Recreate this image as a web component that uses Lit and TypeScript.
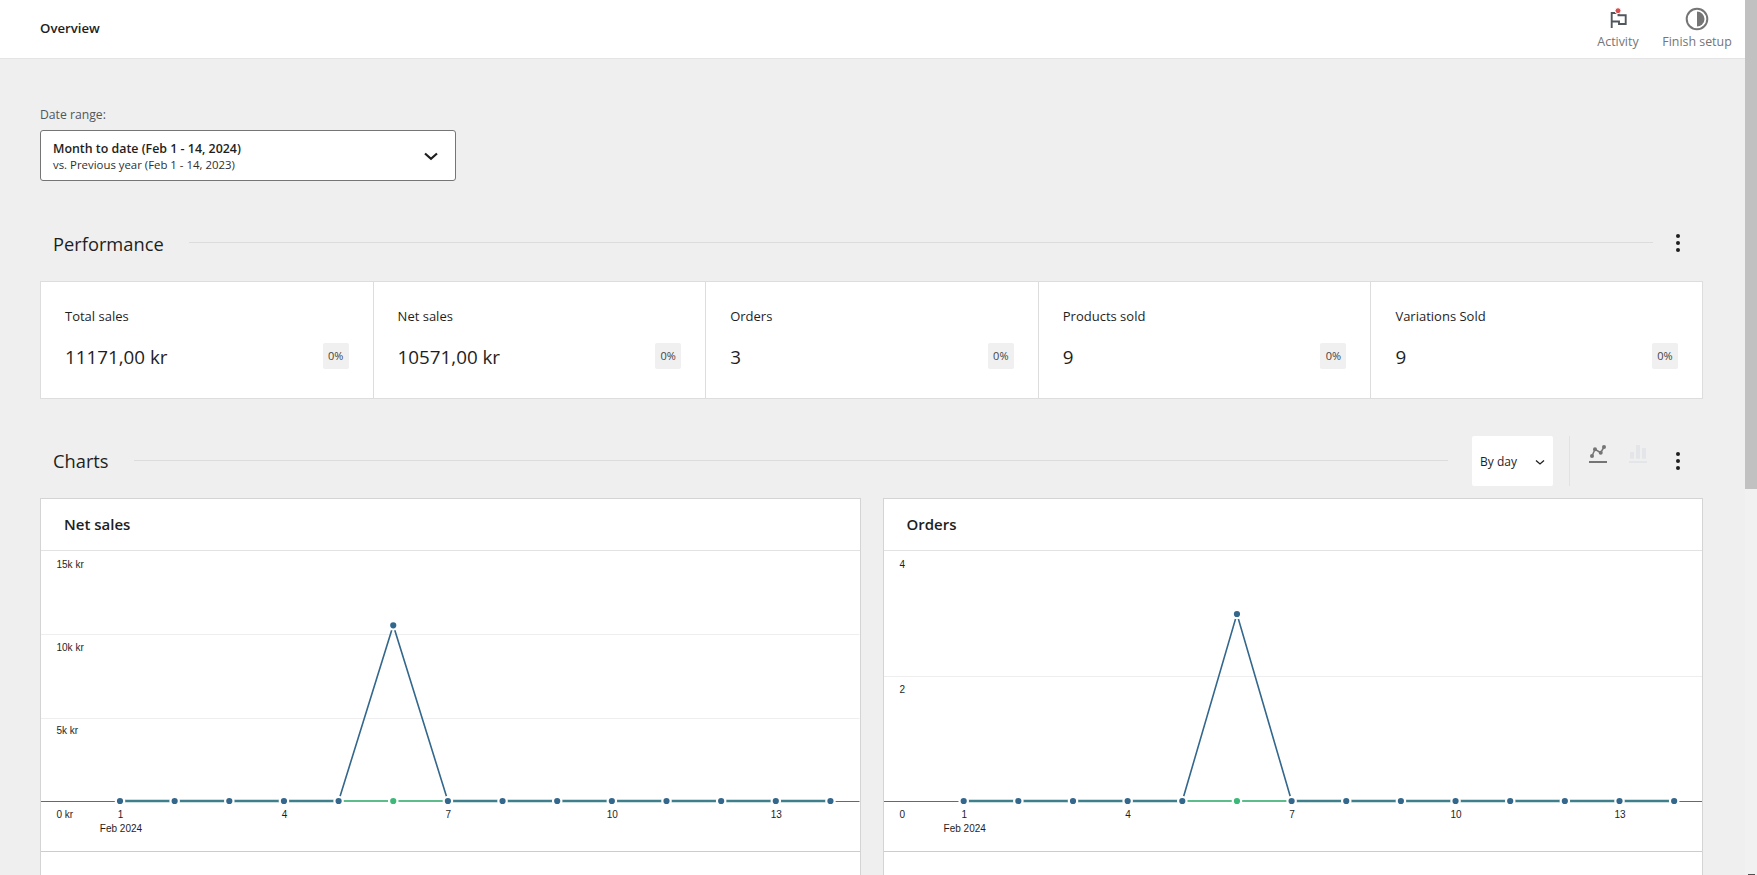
import { LitElement, css, html, svg } from "lit";
import { customElement, property } from "lit/decorators.js";

const PITCH = 54.65;
const BASE_Y = 250.5;
const CHART_H = 250;

const tiles = [
  { label: "Total sales", value: "11171,00 kr" },
  { label: "Net sales", value: "10571,00 kr" },
  { label: "Orders", value: "3" },
  { label: "Products sold", value: "9" },
  { label: "Variations Sold", value: "9" },
];

@customElement("line-chart")
export class LineChart extends LitElement {
  @property({ type: Number }) peak = 0;
  @property({ type: Number }) max = 1;
  @property({ type: Number }) firstX = 79;
  @property({ type: Array }) ticks: { value: number; label: string }[] = [];

  static styles = css`
    :host {
      display: block;
      height: 300px;
    }
    svg {
      display: block;
      width: 100%;
      height: 300px;
    }
    .grid {
      stroke: #eeeeee;
      stroke-width: 1;
    }
    .axis {
      stroke: #686868;
      stroke-width: 1;
    }
    .label {
      font: 10px "Liberation Sans", Arial, sans-serif;
      fill: #1e1e1e;
    }
    .blue {
      fill: none;
      stroke: #33678c;
      stroke-width: 1.6;
    }
    .green {
      fill: none;
      stroke: #5cbc8c;
      stroke-width: 2;
    }
    .teal {
      fill: none;
      stroke: #3f7f8b;
      stroke-width: 2.4;
    }
    .dot {
      stroke: #ffffff;
      stroke-width: 2.2;
    }
  `;

  private yFor(v: number) {
    return BASE_Y - (v / this.max) * CHART_H;
  }

  render() {
    const xs = Array.from({ length: 14 }, (_, i) => this.firstX + i * PITCH);
    const peakY = this.yFor(this.peak);
    return html`<svg>
      ${this.ticks.map((t) =>
        svg`${t.value > 0 && t.value < this.max
          ? svg`<line class="grid" x1="0" x2="100%" y1=${Math.floor(this.yFor(t.value)) + 0.5} y2=${Math.floor(this.yFor(t.value)) + 0.5}></line>`
          : null}
        <text class="label" x="15.5" y=${this.yFor(t.value) + 16}>${t.label}</text>`
      )}
      <line class="axis" x1="0" x2="100%" y1="250.5" y2="250.5"></line>
      <path class="teal" d="M${xs[0]} 250H${xs[4]}M${xs[6]} 250H${xs[13]}"></path>
      <path class="green" d="M${xs[4]} 250H${xs[6]}"></path>
      <path class="blue" d="M${xs[4]} 250L${xs[5]} ${peakY}L${xs[6]} 250"></path>
      ${xs.map(
        (x, i) =>
          svg`<circle class="dot" cx=${x} cy="250" r="4.2" fill=${i === 5 ? "#3cb878" : "#33678c"}></circle>`
      )}
      <circle class="dot" cx=${xs[5]} cy=${peakY} r="4.2" fill="#33678c"></circle>
      ${xs
        .filter((_, i) => i % 3 === 0)
        .map(
          (x, i) =>
            svg`<text class="label" x=${x + 0.5} y="266.5" text-anchor="middle">${1 + i * 3}</text>`
        )}
      <text class="label" x=${xs[0] + 1} y="280.5" text-anchor="middle">Feb 2024</text>
    </svg>`;
  }
}

@customElement("app-root")
export class AppRoot extends LitElement {
  static styles = css`
    :host {
      display: flex;
      height: 875px;
      overflow: hidden;
      background: #efefef;
      font-family: "Open Sans", "Noto Sans", sans-serif;
      color: #1e1e1e;
    }
    .page {
      flex: 1;
      min-width: 0;
    }
    .scrollbar {
      width: 12px;
      background: #f1f1f1;
      display: flex;
      flex-direction: column;
      justify-content: space-between;
    }
    .thumb {
      height: 489px;
      background: #c1c1c1;
    }
    .mark {
      height: 1px;
      margin: 0 2px 0 3px;
      background: #505050;
    }
    .topbar {
      height: 58px;
      background: #fff;
      border-bottom: 1px solid #e4e4e4;
      display: flex;
      align-items: flex-start;
      justify-content: space-between;
      padding: 0 0 0 40px;
    }
    .topbar h1 {
      margin: 0;
      font-size: 13.2px;
      font-weight: 600;
      line-height: 56px;
    }
    .actions {
      display: flex;
    }
    .action {
      display: flex;
      flex-direction: column;
      align-items: center;
      font-size: 12.4px;
      color: #757575;
      padding: 7px 0 0;
      line-height: 16px;
    }
    .action.activity {
      width: 66px;
      margin-right: 4px;
    }
    .action.setup {
      width: 84px;
      margin-right: 6px;
    }
    .action svg {
      display: block;
      margin-bottom: 3px;
    }
    .content {
      padding: 48px 42px 0 40px;
    }
    .range-label {
      font-size: 12.2px;
      line-height: 16px;
      color: #50575e;
      margin-bottom: 7px;
    }
    .range {
      box-sizing: border-box;
      width: 416px;
      height: 51px;
      background: #fff;
      border: 1px solid #757575;
      border-radius: 3px;
      padding: 0 12px;
      display: flex;
      align-items: center;
      justify-content: space-between;
    }
    .range b {
      display: block;
      font-size: 12.4px;
      font-weight: 600;
      line-height: 17px;
    }
    .range span {
      display: block;
      font-size: 11.4px;
      line-height: 15px;
      color: #2f2f2f;
    }
    .section-head {
      display: flex;
      align-items: center;
      padding-left: 13px;
    }
    .section-head h2 {
      margin: 0;
      font-size: 18.3px;
      font-weight: 400;
      line-height: 24px;
    }
    .perf h2 {
      margin-top: 2px;
    }
    .rule {
      flex: 1;
      height: 1px;
      background: #dcdcdc;
      margin: 0 0 2px 25px;
    }
    .dots {
      width: 50px;
      display: flex;
      justify-content: center;
      flex: none;
    }
    .perf {
      margin-top: 50px;
      height: 24px;
    }
    .tiles {
      display: grid;
      grid-template-columns: repeat(5, 1fr);
      margin-top: 26px;
      background: #fff;
    }
    .tile {
      height: 118px;
      box-sizing: border-box;
      padding: 24px;
      border: 1px solid #dddddd;
      border-right: none;
    }
    .tile:last-child {
      border-right: 1px solid #dddddd;
    }
    .tile-label {
      font-size: 13px;
      line-height: 20px;
    }
    .tile-row {
      display: flex;
      align-items: center;
      justify-content: space-between;
      margin-top: 16px;
    }
    .tile-value {
      font-size: 18.8px;
      line-height: 26px;
      padding-top: 2px;
    }
    .chip {
      width: 26px;
      height: 26px;
      background: #f0f0f0;
      border-radius: 2px;
      font-size: 11px;
      line-height: 26px;
      text-align: center;
      color: #444;
    }
    .charts {
      margin-top: 37px;
      height: 50px;
    }
    .charts .rule {
      margin-right: 24px;
    }
    .interval {
      box-sizing: border-box;
      width: 81px;
      height: 50px;
      background: #fff;
      border-radius: 2px;
      padding: 0 8px;
      display: flex;
      align-items: center;
      justify-content: space-between;
      font-size: 12px;
    }
    .interval svg {
      margin: 2px 0 0;
      transform: translateX(1px);
    }
    .divider {
      width: 1px;
      height: 50px;
      background: #e2e2e2;
      margin-left: 16px;
    }
    .mode {
      flex: none;
      display: block;
      margin-bottom: 14px;
    }
    .mode.line {
      margin-left: 18px;
    }
    .mode.bar {
      margin-left: 20px;
    }
    .charts .dots {
      margin-left: 5px;
    }
    .cards {
      display: grid;
      grid-template-columns: 1fr 1fr;
      gap: 22px;
      margin-top: 12px;
    }
    .card {
      background: #fff;
      border: 1px solid #d4d4d4;
      border-bottom: none;
      height: 400px;
    }
    .card-head {
      height: 52px;
      box-sizing: border-box;
      border-bottom: 1px solid #e2e2e2;
      padding-left: 23px;
      font-size: 15px;
      font-weight: 600;
      line-height: 50px;
    }
    .card-foot {
      border-top: 1px solid #cccccc;
    }
  `;

  private kebab() {
    return html`<div class="dots">
      <svg width="4" height="18" viewBox="0 0 4 18" fill="#1e1e1e">
        <circle cx="2" cy="2" r="2"></circle>
        <circle cx="2" cy="9" r="2"></circle>
        <circle cx="2" cy="16" r="2"></circle>
      </svg>
    </div>`;
  }

  render() {
    return html`
      <div class="page">
        <header class="topbar">
          <h1>Overview</h1>
          <div class="actions">
            <div class="action activity">
              <svg width="24" height="24" viewBox="0 0 24 24" fill="none">
                <path d="M5.700 21V6h6.800v2.200h7.200V17H13v-2.500H5.700" stroke="#50575e" stroke-width="1.900"></path>
                <circle cx="12" cy="3.700" r="3" fill="#d94f4f" stroke="#fff"></circle>
              </svg>
              Activity
            </div>
            <div class="action setup">
              <svg width="24" height="24" viewBox="0 0 24 24">
                <circle cx="12" cy="12" r="10.300" fill="none" stroke="#757575" stroke-width="2"></circle>
                <path d="M12 4.500a7.500 7.500 0 0 1 0 15z" fill="#757575"></path>
              </svg>
              Finish setup
            </div>
          </div>
        </header>
        <div class="content">
          <div class="range-label">Date range:</div>
          <div class="range">
            <div>
              <b>Month to date (Feb 1 - 14, 2024)</b>
              <span>vs. Previous year (Feb 1 - 14, 2023)</span>
            </div>
            <svg width="24" height="24" viewBox="0 0 24 24" fill="none">
              <path d="M6 9.500l6 5.300 6-5.300" stroke="#1e1e1e" stroke-width="2.200"></path>
            </svg>
          </div>

          <div class="section-head perf">
            <h2>Performance</h2>
            <div class="rule"></div>
            ${this.kebab()}
          </div>
          <div class="tiles">
            ${tiles.map(
              (t) => html`<div class="tile">
                <div class="tile-label">${t.label}</div>
                <div class="tile-row">
                  <div class="tile-value">${t.value}</div>
                  <div class="chip">0%</div>
                </div>
              </div>`
            )}
          </div>

          <div class="section-head charts">
            <h2>Charts</h2>
            <div class="rule"></div>
            <div class="interval">
              By day
              <svg width="12" height="12" viewBox="0 0 12 12" fill="none">
                <path d="M2 4.500l4 3.500 4-3.500" stroke="#1e1e1e" stroke-width="1.300"></path>
              </svg>
            </div>
            <div class="divider"></div>
            <svg class="mode line" width="20" height="20" viewBox="0 0 20 20" fill="none">
              <path d="M4 12l3-6.700 5.700 3.400L16 3" stroke="#757575" stroke-width="1.500"></path>
              <g fill="#757575">
                <circle cx="4" cy="12" r="2"></circle>
                <circle cx="7" cy="5.300" r="2"></circle>
                <circle cx="12.700" cy="8.700" r="2"></circle>
                <circle cx="16" cy="3" r="2"></circle>
              </g>
              <rect x="1" y="17" width="18" height="2" fill="#757575"></rect>
            </svg>
            <svg class="mode bar" width="20" height="20" viewBox="0 0 20 20" fill="#e3e5e8">
              <rect x="2" y="8" width="4" height="6.700"></rect>
              <rect x="8" y="1" width="4" height="13.700"></rect>
              <rect x="14" y="4" width="4" height="10.700"></rect>
              <rect x="1" y="17" width="18" height="2"></rect>
            </svg>
            ${this.kebab()}
          </div>
          <div class="cards">
            <div class="card">
              <div class="card-head">Net sales</div>
              <line-chart
                .peak=${10571}
                .max=${15000}
                .ticks=${[
                  { value: 15000, label: "15k kr" },
                  { value: 10000, label: "10k kr" },
                  { value: 5000, label: "5k kr" },
                  { value: 0, label: "0 kr" },
                ]}
              ></line-chart>
              <div class="card-foot"></div>
            </div>
            <div class="card">
              <div class="card-head">Orders</div>
              <line-chart
                .peak=${3}
                .max=${4}
                .firstX=${79.7}
                .ticks=${[
                  { value: 4, label: "4" },
                  { value: 2, label: "2" },
                  { value: 0, label: "0" },
                ]}
              ></line-chart>
              <div class="card-foot"></div>
            </div>
          </div>
        </div>
      </div>
      <div class="scrollbar">
        <div class="thumb"></div>
        <div class="mark"></div>
      </div>
    `;
  }
}
